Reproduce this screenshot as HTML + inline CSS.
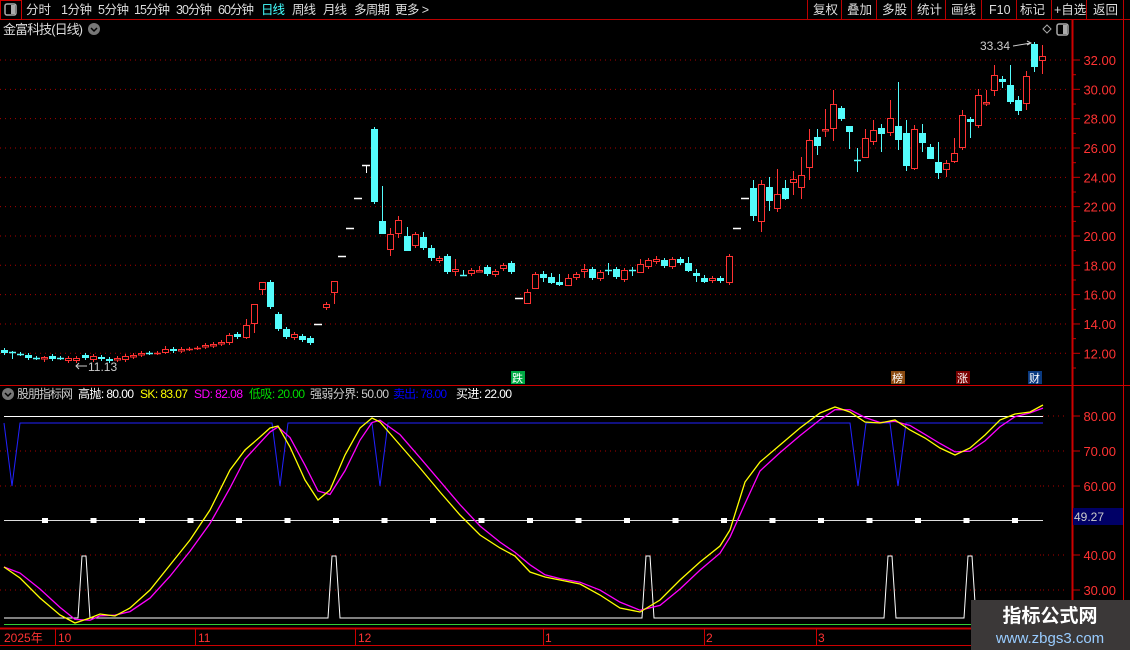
<!DOCTYPE html>
<html><head><meta charset="utf-8"><style>
body{margin:0;width:1130px;height:650px;background:#000;overflow:hidden;font-family:"Liberation Sans","Noto Sans CJK SC",sans-serif;}
svg{position:absolute;left:0;top:0}
</style></head><body>
<svg id="s" width="1130" height="650" xmlns="http://www.w3.org/2000/svg" font-family="Liberation Sans, Noto Sans CJK SC, sans-serif">
<rect x="0" y="0" width="1130" height="20" fill="#000"/>
<line x1="0" y1="19.5" x2="1130" y2="19.5" stroke="#b00" />
<rect x="0.5" y="0.5" width="21" height="19" fill="none" stroke="#c00"/>
<rect x="5" y="4" width="11" height="11" rx="2" fill="none" stroke="#aaa" stroke-width="1.5"/><rect x="11" y="5" width="4" height="9" fill="#aaa"/>
<g font-size="12.5" fill="#ddd">
<text x="26" y="14" textLength="25">分时</text><text x="61" y="14" textLength="31">1分钟</text><text x="98" y="14" textLength="31">5分钟</text><text x="134" y="14" textLength="36">15分钟</text><text x="176" y="14" textLength="36">30分钟</text><text x="218" y="14" textLength="36">60分钟</text>
<text x="261" y="14" fill="#4ff" textLength="24">日线</text><text x="292" y="14" textLength="24">周线</text><text x="323" y="14" textLength="24">月线</text><text x="354" y="14" textLength="36">多周期</text><text x="395" y="14" textLength="34">更多 &gt;</text>
<text x="813" y="14">复权</text><text x="847" y="14">叠加</text><text x="882" y="14">多股</text><text x="917" y="14">统计</text><text x="951" y="14">画线</text><text x="989" y="14">F10</text><text x="1020" y="14">标记</text><text x="1054" y="14">+自选</text><text x="1093" y="14">返回</text>
</g>
<g stroke="#b00"><line x1="807.5" y1="0" x2="807.5" y2="19"/><line x1="841.5" y1="0" x2="841.5" y2="19"/><line x1="876.5" y1="0" x2="876.5" y2="19"/><line x1="911.5" y1="0" x2="911.5" y2="19"/><line x1="945.5" y1="0" x2="945.5" y2="19"/><line x1="981.5" y1="0" x2="981.5" y2="19"/><line x1="1016.5" y1="0" x2="1016.5" y2="19"/><line x1="1051.5" y1="0" x2="1051.5" y2="19"/><line x1="1086.5" y1="0" x2="1086.5" y2="19"/><line x1="1123.5" y1="0" x2="1123.5" y2="19"/></g>
<text x="3" y="34" font-size="13" fill="#ddd" textLength="80">金富科技(日线)</text>
<circle cx="94" cy="29" r="6" fill="#777"/><path d="M91 28l3 3 3-3" stroke="#000" stroke-width="1.5" fill="none"/>
<path d="M1043 29l4-4 4 4-4 4z" fill="none" stroke="#aaa"/>
<rect x="1057" y="24" width="11" height="11" rx="2" fill="none" stroke="#aaa" stroke-width="1.5"/><rect x="1063" y="25" width="4" height="9" fill="#aaa"/>
<line x1="1072.5" y1="20" x2="1072.5" y2="650" stroke="#c00" stroke-width="2"/>
<line x1="1123.5" y1="20" x2="1123.5" y2="650" stroke="#c00"/>
<line x1="0" y1="385.5" x2="1130" y2="385.5" stroke="#c00"/>
<line x1="0" y1="628.5" x2="1130" y2="628.5" stroke="#c00" stroke-width="2"/>
<line x1="0" y1="645.5" x2="1130" y2="645.5" stroke="#c00"/>
<g id="grid"></g>
<g id="cand"></g>
<text x="980" y="50" font-size="12" fill="#ccc">33.34</text><path d="M1013 46l18-3m-4-2l4 2-4 2" stroke="#ccc" fill="none"/>
<text x="88" y="371" font-size="12" fill="#ccc">11.13</text><path d="M76 366h11m-8-3l-3 3 3 3" stroke="#ccc" fill="none"/>
<g font-size="11"><rect x="511" y="371" width="14" height="13" fill="#0a4"/><text x="512" y="382" fill="#fff">跌</text>
<rect x="891" y="371" width="14" height="13" fill="#8a4a10"/><text x="892" y="382" fill="#fff">榜</text>
<rect x="956" y="371" width="14" height="13" fill="#7a0000"/><text x="957" y="382" fill="#fff">涨</text>
<rect x="1028" y="371" width="14" height="13" fill="#0a3a80"/><text x="1029" y="382" fill="#fff">财</text></g>
<circle cx="8" cy="394" r="6" fill="#777"/><path d="M5 393l3 3 3-3" stroke="#000" stroke-width="1.5" fill="none"/>
<g font-size="12"><text x="17" y="398" fill="#ccc" textLength="56">股朋指标网</text><text x="78" y="398" fill="#fff" textLength="56">高抛: 80.00</text>
<text x="140" y="398" fill="#ff0" textLength="48">SK: 83.07</text><text x="194" y="398" fill="#f0f" textLength="49">SD: 82.08</text><text x="249" y="398" fill="#0d0" textLength="56">低吸: 20.00</text>
<text x="310" y="398" fill="#ccc" textLength="79">强弱分界: 50.00</text><text x="393" y="398" fill="#00f" textLength="54">卖出: 78.00</text><text x="456" y="398" fill="#fff" textLength="56">买进: 22.00</text></g>
<g id="ind"></g>
<rect x="1073" y="508" width="50" height="17" fill="#006"/><text x="1074" y="521" font-size="12" fill="#ccc">49.27</text>
<g font-size="12" fill="#f33"><text x="4" y="642">2025年</text><text x="58" y="642">10</text><text x="198" y="642">11</text><text x="358" y="642">12</text><text x="545" y="642">1</text><text x="706" y="642">2</text><text x="818" y="642">3</text></g>
<g stroke="#c00"><line x1="55.5" y1="629" x2="55.5" y2="645"/><line x1="195.5" y1="629" x2="195.5" y2="645"/><line x1="355.5" y1="629" x2="355.5" y2="645"/><line x1="543.5" y1="629" x2="543.5" y2="645"/><line x1="704.5" y1="629" x2="704.5" y2="645"/><line x1="816.5" y1="629" x2="816.5" y2="645"/></g>
<rect x="971" y="600" width="159" height="50" fill="#3b3838"/>
<text x="1050" y="622" font-size="19" font-weight="bold" fill="#fff" text-anchor="middle">指标公式网</text>
<text x="1050" y="643" font-size="15" fill="#9cf" text-anchor="middle">www.zbgs3.com</text>
</svg>
<script>
var NS="http://www.w3.org/2000/svg";
function el(p,t,a){var e=document.createElementNS(NS,t);for(var k in a)e.setAttribute(k,a[k]);p.appendChild(e);return e;}
var g=document.getElementById('grid');
for(var i=0;i<11;i++){var y=60+i*29.33;el(g,'line',{x1:0,y1:y,x2:1068,y2:y,stroke:'#a00','stroke-dasharray':'1 4'});
el(g,'line',{x1:1072,y1:y,x2:1080,y2:y,stroke:'#c00'});
var t=el(g,'text',{x:1116,y:y+5,'font-size':13,fill:'#f33','text-anchor':'end'});t.textContent=(32-2*i).toFixed(2);
el(g,'line',{x1:1072,y1:y+14.7,x2:1076,y2:y+14.7,stroke:'#c00'});}
var ig=[[80,416],[70,451],[60,486],[40,555],[30,590]];
ig.forEach(function(v){el(g,'line',{x1:1043,y1:v[1],x2:1068,y2:v[1],stroke:'#a00','stroke-dasharray':'1 4'});
if(v[0]!=80)el(g,'line',{x1:0,y1:v[1],x2:1043,y2:v[1],stroke:'#a00','stroke-dasharray':'1 4'});
el(g,'line',{x1:1072,y1:v[1],x2:1080,y2:v[1],stroke:'#c00'});
var t=el(g,'text',{x:1116,y:v[1]+5,'font-size':13,fill:'#f33','text-anchor':'end'});t.textContent=v[0].toFixed(2);});
var D=[
'c350,353','x352,352,351,359','x354,354','c355,358','x358,358','r357,359,356,362','c356,359','x358,358','r358,361','r358,361','c355,358','r356,360','c357,359','c359,361','r358,360','r356,360','r355,357','r353,355','x353,353','y353,353','r349,353,346,354','c349,351','r349,351','y349,349','y348,348','r345,347','r344,346','r342,344','r335,343','c334,337','r325,338,319,339','r304,324,304,333','r282,290,282,295','c282,307','c314,329','c329,337','r334,338','c336,340','c338,343','w324','r304,308','r281,293,281,304','w256','w228','w198','w165,165,165,173','c129,202','c221,234,186,234','r234,250,228,256','r220,234,216,238',
'c236,251,227,251','r234,246','c237,248,232,250','c248,258,245,261','r258,261','c256,272','r269,272,259,276','x275,275,270,276','r270,274','r270,270,266,272','c267,274','r271,275','r265,269','c263,272','w298','r292,304,289,304','r274,289,272,289','c274,278,271,282','c277,283,273,284','c282,285,274,286','r278,286,274,286','r274,278','r269,272,264,278','c269,278','r272,279','x270,270,263,275','c269,277','r270,280','x270,270,267,276','r264,273,259,273','r260,267','r259,262,256,264','c260,266','r259,267','c259,263','c263,271,257,272','c273,276,269,282','c278,282,275,283','r278,281','c278,281,276,283','r256,283','w228','w198',
'c188,216,180,221','r184,222,180,232','c187,201,177,211','r194,209,169,212','c188,199,180,200','r179,183,171,195','r175,188,157,199','r140,168,129,180','c137,146,129,155','r129,131,109,137','r104,129,90,141','c108,119','c126,132,126,149','x160,160,148,172','r138,158,129,158','r130,142,120,145','c128,134,124,152','r118,133,100,136','c126,140,82,150','c133,166,120,171','r129,169,125,170','c133,143,124,152','c147,159,144,159','c162,173,142,179','r163,170,160,177','r153,162,138,163','r115,148,110,150','c119,122,117,138','r95,126,89,128','r102,104,90,106','r75,91,65,96','c79,82,76,88','c85,102,65,104','c100,111,96,115','r76,104,71,110','c44,67,42,72','r56,61,45,74'];
var cg=document.getElementById('cand');var CY='#54fcfc',RD='#ff3232';
D.forEach(function(s,i){var t=s[0];var a=s.slice(1).split(',').map(Number);var x=Math.round(4+8.05*i);
var top=a[0],bot=a.length>1?a[1]:a[0];var wt=a.length>2?a[2]:top-2,wb=a.length>3?a[3]:bot+2;
if(t=='w'){el(cg,'line',{x1:x-4,y1:top+0.5,x2:x+4,y2:top+0.5,stroke:'#fff','stroke-width':1.5});if(a.length>3)el(cg,'line',{x1:x+0.5,y1:top,x2:x+0.5,y2:wb,stroke:'#fff'});return;}
var col=(t=='c'||t=='x')?CY:RD;
el(cg,'line',{x1:x+0.5,y1:wt,x2:x+0.5,y2:wb,stroke:col});
if(t=='x'||t=='y'){el(cg,'line',{x1:x-3,y1:top+0.5,x2:x+4,y2:top+0.5,stroke:col,'stroke-width':1.5});return;}
if(t=='c')el(cg,'rect',{x:x-3,y:top,width:7,height:Math.max(bot-top,2),fill:col});
else el(cg,'rect',{x:x-2.5,y:top+0.5,width:6,height:Math.max(bot-top-1,1.5),fill:'#000',stroke:col});
});
var ind=document.getElementById('ind');
el(ind,'line',{x1:4,y1:416.5,x2:1043,y2:416.5,stroke:'#fff'});
el(ind,'line',{x1:4,y1:520.5,x2:1043,y2:520.5,stroke:'#ddd'});
el(ind,'line',{x1:4,y1:624.5,x2:1043,y2:624.5,stroke:'#3c3'});
for(var x=45;x<1043;x+=48.5){el(ind,'rect',{x:x-3,y:518,width:6,height:5,fill:'#fff'});}
var bl='M4 423',vx=[12,280,380,858,898];vx.forEach(function(v){bl+=' L'+(v-8)+' 423 L'+v+' 486 L'+(v+8)+' 423';});bl+=' L1043 423';
el(ind,'path',{d:bl,stroke:'#22f',fill:'none'});
var wp='M4 618',sx=[84,334,648,890,970];sx.forEach(function(v){wp+=' L'+(v-6)+' 618 L'+(v-2)+' 556 L'+(v+2)+' 556 L'+(v+6)+' 618';});wp+=' L1043 618';
el(ind,'path',{d:wp,stroke:'#fff',fill:'none'});
var Y=[[4,567],[20,578],[40,598],[60,615],[75,623],[90,618],[100,614],[115,616],[130,608],[150,590],[170,565],[190,540],[210,510],[230,470],[245,450],[260,437],[270,428],[278,426],[290,447],[305,480],[318,500],[330,490],[345,455],[360,428],[372,418],[380,422],[400,445],[420,468],[440,492],[460,515],[480,535],[500,548],[515,556],[530,572],[545,577],[560,580],[580,584],[600,595],[620,608],[640,612],[660,600],[680,580],[700,562],[720,546],[730,530],[745,482],[760,462],[780,445],[800,428],[820,413],[835,407],[850,412],[865,422],[880,423],[895,420],[910,430],[925,438],[940,448],[955,455],[970,448],[985,435],[1000,420],[1015,414],[1030,412],[1043,405]];
var M=Y.map(function(p,i){var q=Y[Math.max(0,i-1)];return [p[0],(p[1]*0.55+q[1]*0.45)];});
el(ind,'polyline',{points:M.map(function(p){return p.join(',')}).join(' '),stroke:'#f0f',fill:'none','stroke-width':1.3});
el(ind,'polyline',{points:Y.map(function(p){return p.join(',')}).join(' '),stroke:'#ff0',fill:'none','stroke-width':1.3});
</script>
</body></html>
